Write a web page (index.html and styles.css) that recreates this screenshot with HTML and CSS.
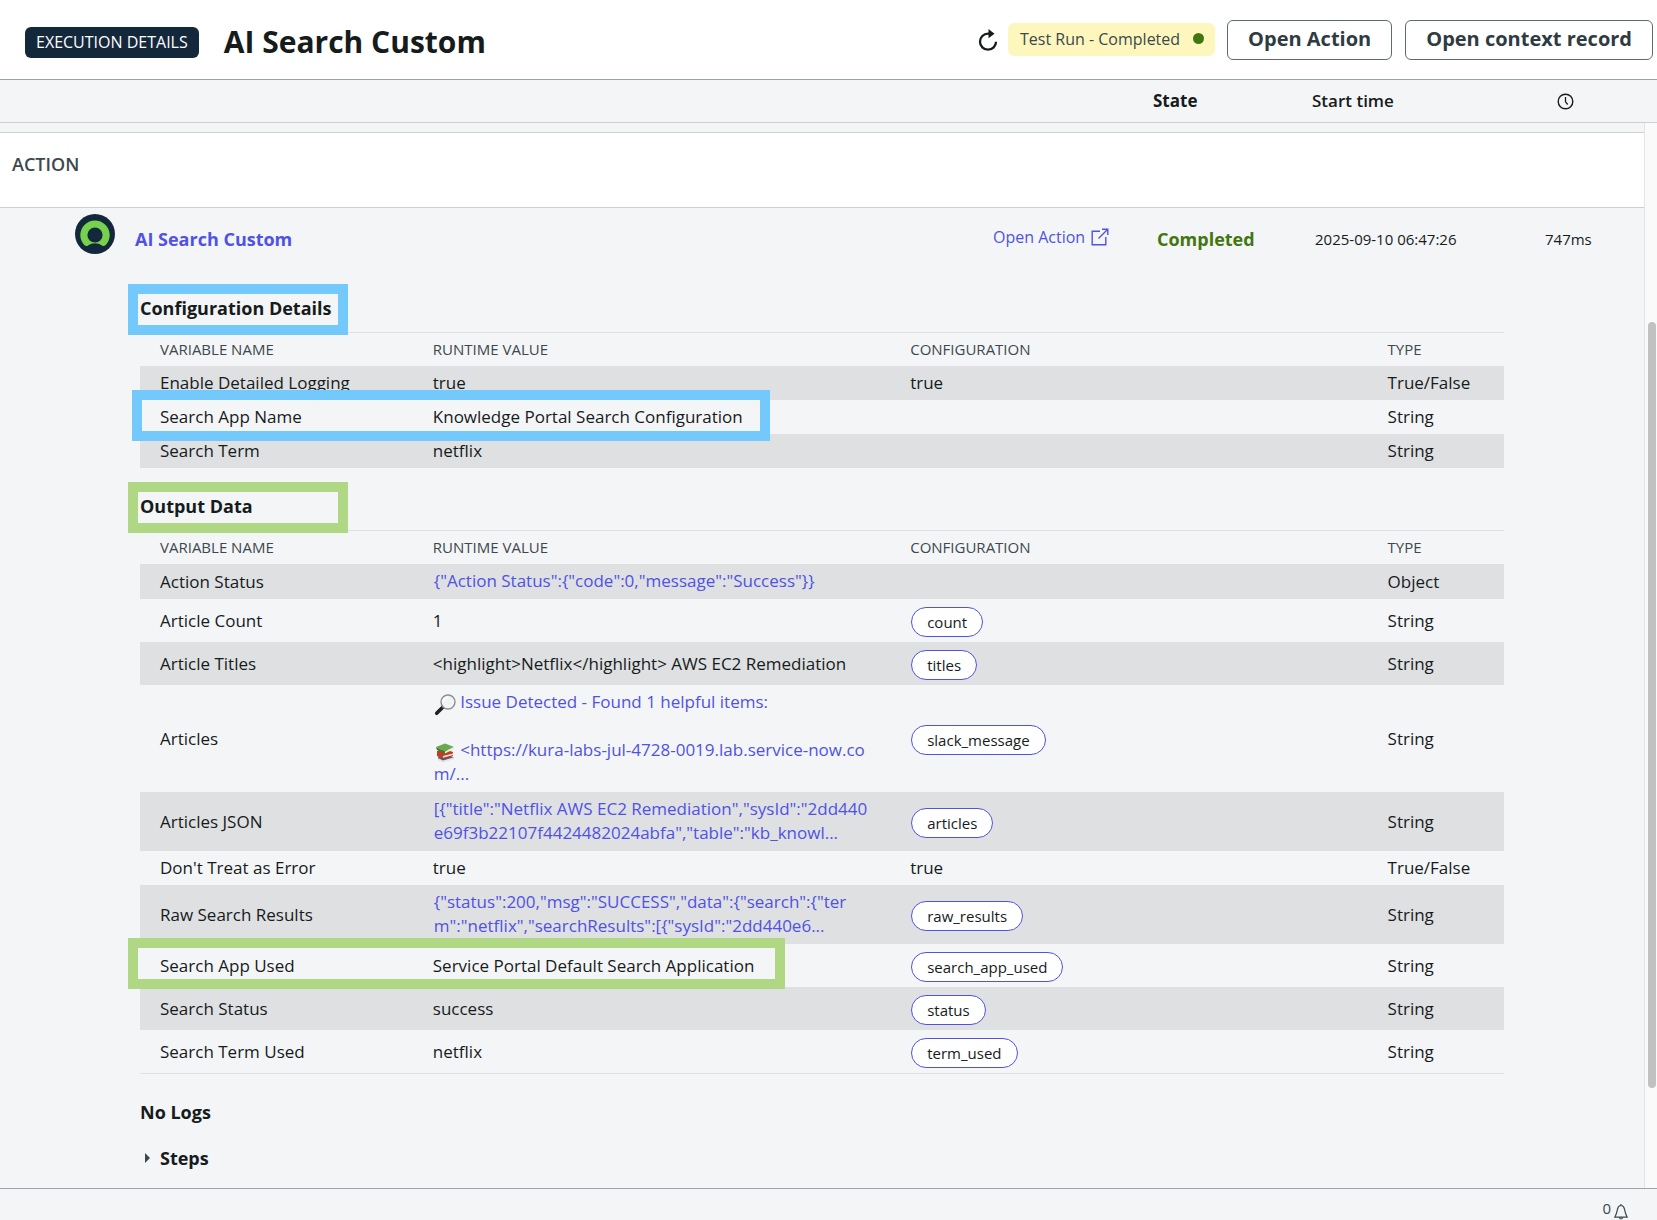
FILE: index.html
```html
<!DOCTYPE html>
<html lang="en">
<head>
<meta charset="utf-8">
<title>Execution Details - AI Search Custom</title>
<link rel="stylesheet" href="styles.css">
</head>
<body>
<header class="topbar">
  <span class="badge">EXECUTION DETAILS</span>
  <h1 class="title">AI Search Custom</h1>
  <button class="refresh" type="button" aria-label="Refresh">
    <svg width="20" height="24" viewBox="0 0 20 24"><path d="M11.500 5.700H10A8 8 0 1 0 18 13.700" fill="none" stroke="#161b1c" stroke-width="2.300"/><path d="M10.500 1 16.500 5.700 10.500 10.200z" fill="#161b1c"/></svg>
  </button>
  <span class="run-state">Test Run - Completed <i class="dot"></i></span>
  <button class="btn" type="button">Open Action</button>
  <button class="btn" type="button">Open context record</button>
</header>

<div class="columns">
  <span></span>
  <span class="col-state">State</span>
  <span class="col-start">Start time</span>
  <svg width="17" height="17" viewBox="0 0 17 17" fill="none" stroke="#161b1c"><circle cx="8.500" cy="8.500" r="7.300" stroke-width="1.400"/><path d="M8.500 4v4.800l2.200 2.700" stroke-width="1.300"/></svg>
</div>

<div class="body">
  <main class="content">
    <h2 class="group">ACTION</h2>

    <div class="run">
      <svg class="run-logo" width="40" height="40" viewBox="0 0 40 40"><circle cx="20" cy="20" r="20" fill="#14283b"/><path d="M20 6.500A14.700 14.700 0 0 0 5.300 21c0 4 1.600 7.600 4.200 10.200 1 1 2.500 1.100 3.600.3 4.100-3 9.700-3 13.800 0 1.100.8 2.600.7 3.600-.3A14.600 14.600 0 0 0 34.700 21 14.700 14.700 0 0 0 20 6.500z" fill="#76d14e"/><circle cx="20" cy="21" r="7.600" fill="#14283b"/></svg>
      <a class="run-name" href="#">AI Search Custom</a>
      <a class="run-open" href="#">Open Action<svg width="18" height="18" viewBox="0 0 18 18" fill="none" stroke="#4f52e5" stroke-width="1.400"><path d="M9 3.200H1.200v13.600h13.600V9M7.500 10.500 16.500 1.500M11 1.200h5.800V7"/></svg></a>
      <span class="run-status">Completed</span>
      <span class="run-time">2025-09-10 06:47:26</span>
      <span class="run-time">747ms</span>
    </div>

    <section class="details">
      <h3 class="heading">Configuration Details<i class="mark mark-heading blue"></i></h3>
      <table class="vars">
        <colgroup><col class="c-name"><col class="c-value"><col class="c-value"><col></colgroup>
        <thead><tr><th>VARIABLE NAME</th><th>RUNTIME VALUE</th><th>CONFIGURATION</th><th>TYPE</th></tr></thead>
        <tbody>
          <tr><td>Enable Detailed Logging</td><td>true</td><td>true</td><td>True/False</td></tr>
          <tr><td class="anchor">Search App Name<i class="mark mark-config blue"></i></td><td>Knowledge Portal Search Configuration</td><td></td><td>String</td></tr>
          <tr><td>Search Term</td><td>netflix</td><td></td><td>String</td></tr>
        </tbody>
      </table>

      <h3 class="heading">Output Data<i class="mark mark-heading green"></i></h3>
      <table class="vars vars-output">
        <colgroup><col class="c-name"><col class="c-value"><col class="c-value"><col></colgroup>
        <thead><tr><th>VARIABLE NAME</th><th>RUNTIME VALUE</th><th>CONFIGURATION</th><th>TYPE</th></tr></thead>
        <tbody>
          <tr><td>Action Status</td><td class="link-cell"><a href="#">{"Action Status":{"code":0,"message":"Success"}}</a></td><td></td><td>Object</td></tr>
          <tr><td>Article Count</td><td>1</td><td class="pill-cell"><span class="pill">count</span></td><td>String</td></tr>
          <tr><td>Article Titles</td><td>&lt;highlight&gt;Netflix&lt;/highlight&gt; AWS EC2 Remediation</td><td class="pill-cell"><span class="pill">titles</span></td><td>String</td></tr>
          <tr><td>Articles</td><td class="link-cell"><a href="#"><svg class="emoji" width="22" height="22" viewBox="0 0 22 22"><path d="M9.500 12.500 2.700 19.300" stroke="#222" stroke-width="3.600" stroke-linecap="round"/><path d="M11.500 10.500 8.500 13.500" stroke="#777" stroke-width="2"/><circle cx="14" cy="8" r="7" fill="#f2f3f5" stroke="#8b8f94" stroke-width="1.400"/><path d="M9.500 7.500a4.500 4.500 0 0 1 4.500-4" fill="none" stroke="#fff" stroke-width="1.500"/></svg> Issue Detected - Found 1 helpful items:<br><br><svg class="emoji" width="22" height="22" viewBox="0 0 22 22"><path d="M4 15l11-2 5 3-11 4-4-2z" fill="#4b5b7d"/><path d="M5 16.500l4 2 10-3v2l-10 3-4-2z" fill="#e9e6df"/><path d="M3 9l10-1 6 2v4l-10 3-6-3z" fill="#c43d22"/><path d="M9 14l10-2.500v1.600l-10 2.600z" fill="#efe7dc"/><path d="M2 5l9-3.500 9 3.500-9 4.500z" fill="#69a84b"/><path d="M2 5l9 4.500V12L3 8z" fill="#3f7a2d"/><path d="M11 9.500 20 5v2l-9 4.500z" fill="#e8efe1"/></svg> &lt;https://kura-labs-jul-4728-0019.lab.service-now.co<br>m/...</a></td><td class="pill-cell"><span class="pill">slack_message</span></td><td>String</td></tr>
          <tr><td>Articles JSON</td><td class="link-cell"><a href="#">[{"title":"Netflix AWS EC2 Remediation","sysId":"2dd440<br>e69f3b22107f4424482024abfa","table":"kb_knowl...</a></td><td class="pill-cell"><span class="pill">articles</span></td><td>String</td></tr>
          <tr><td>Don't Treat as Error</td><td>true</td><td>true</td><td>True/False</td></tr>
          <tr><td>Raw Search Results</td><td class="link-cell"><a href="#">{"status":200,"msg":"SUCCESS","data":{"search":{"ter<br>m":"netflix","searchResults":[{"sysId":"2dd440e6...</a></td><td class="pill-cell"><span class="pill">raw_results</span></td><td>String</td></tr>
          <tr><td class="anchor">Search App Used<i class="mark mark-output green"></i></td><td>Service Portal Default Search Application</td><td class="pill-cell"><span class="pill">search_app_used</span></td><td>String</td></tr>
          <tr><td>Search Status</td><td>success</td><td class="pill-cell"><span class="pill">status</span></td><td>String</td></tr>
          <tr><td>Search Term Used</td><td>netflix</td><td class="pill-cell"><span class="pill">term_used</span></td><td>String</td></tr>
        </tbody>
      </table>

      <h3 class="subheading">No Logs</h3>
      <h3 class="subheading"><button class="steps" type="button"><svg width="6" height="10" viewBox="0 0 6 10"><path d="M0 0l5 5-5 5z" fill="#3c484d"/></svg>Steps</button></h3>
    </section>
  </main>
  <div class="track"><div class="thumb"></div></div>
</div>

<footer class="footer">
  <span>0</span>
  <svg width="14" height="16" viewBox="0 0 14 16" fill="none" stroke="#3c484d" stroke-width="1.200"><path d="M7 1.500C4.800 1.500 4 2.700 3.600 4.800 3 8 2.500 10 .8 13.200h12.400C11.500 10 11 8 10.400 4.800 10 2.700 9.200 1.500 7 1.500zM7 0v1.500M5.500 13.500c.2 2 2.800 2 3 0"/></svg>
</footer>
</body>
</html>
```
FILE: styles.css
```css
* { box-sizing: border-box; }

body {
  margin: 0;
  min-height: 100vh;
  display: flex;
  flex-direction: column;
  background: #f4f5f7;
  color: #161b1c;
  font: 17px/24px "Open Sans", "Noto Sans", sans-serif;
}

h1, h2, h3 { margin: 0; }
a { color: #4f52e5; text-decoration: none; }
button { font-family: inherit; cursor: pointer; }
svg { display: block; flex: none; }

.topbar {
  display: flex;
  align-items: center;
  height: 80px;
  padding: 0 4px 0 25px;
  background: #fff;
  border-bottom: 1px solid #9aa3a9;
}
.badge {
  padding: 3px 11px 4px;
  border-radius: 6px;
  background: #14283b;
  color: #fff;
  font-size: 16px;
  margin-top: 5px;
}
.title {
  flex: 1;
  margin: 5px 0 0 25px;
  font-size: 30px;
  line-height: 40px;
  font-weight: 700;
}
.refresh {
  padding: 0;
  border: 0;
  background: none;
  margin-right: 10px;
}
.run-state {
  display: flex;
  align-items: center;
  gap: 13px;
  height: 33px;
  padding: 0 11px 2px 12px;
  margin-right: 12px;
  border-radius: 6px;
  background: #fef7bd;
  color: #3c484d;
  font-size: 16px;
}
.dot {
  width: 11px;
  height: 11px;
  border-radius: 50%;
  background: #42760f;
}
.btn {
  height: 40px;
  padding: 0 20px 3px;
  border: 1px solid #5e6b73;
  border-radius: 6px;
  background: #fff;
  color: #2e3b42;
  font-size: 20px;
  font-weight: 700;
}
.btn + .btn { margin-left: 13px; }

.columns {
  display: grid;
  grid-template-columns: 1fr 159px 245px 100px;
  align-items: center;
  height: 43px;
  border-bottom: 1px solid #cbd0d3;
}
.col-state { font-weight: 700; }
.col-start { font-weight: 600; }

.body { flex: 1; display: flex; }
.content { flex: 1; min-width: 0; padding-top: 9px; }
.group {
  height: 76px;
  padding: 19px 12px;
  border: solid #cbd0d3;
  border-width: 1px 0;
  background: #fff;
  color: #3c484d;
  font-size: 18px;
  font-weight: 600;
}

.run {
  display: grid;
  grid-template-columns: 60px 1fr 164px 158px 230px 99px;
  align-items: start;
  height: 62px;
  padding: 6px 0 0 75px;
}
.run-name, .run-status, .run-time { padding-top: 13px; }
.run-name { font-size: 18px; font-weight: 700; }
.run-open {
  display: flex;
  align-items: center;
  gap: 6px;
  padding-top: 11px;
  font-size: 16px;
}
.run-status { color: #42760f; font-size: 18px; font-weight: 700; }
.run-time { font-size: 15px; }

.details { padding: 0 140px 18px; }
.heading {
  position: relative;
  padding: 26px 0 12px;
  font-size: 18px;
  font-weight: 700;
}

.vars {
  width: 100%;
  table-layout: fixed;
  border-collapse: separate;
  border-spacing: 0;
  border-top: 1px solid #dfe1e4;
}
.vars-output { border-bottom: 1px solid #dfe1e4; }
.c-name { width: 20%; }
.c-value { width: 35%; }
.vars th {
  padding: 4px 0 5px 20px;
  color: #3c484d;
  font-size: 15px;
  font-weight: 400;
  text-align: left;
}
.vars td { padding: 5px 0 5px 20px; white-space: nowrap; }
.vars tbody tr:nth-child(odd) { background: #dfe0e2; }
.vars .link-cell { padding: 5px 0 6px 21px; }
.vars .pill-cell { padding: 8px 0 5px 21px; }
.pill {
  display: block;
  width: fit-content;
  padding: 2px 15px;
  border: 1px solid #4f52e5;
  border-radius: 15px;
  background: #fff;
  font-size: 15px;
}
.emoji { display: inline-block; vertical-align: -4px; margin: -4px 0; }

/* Call-out frames laid over headings and rows */
.anchor { position: relative; }
.mark {
  position: absolute;
  height: 51px;
  border: 10px solid;
  z-index: 1;
  pointer-events: none;
}
.blue { border-color: #73c9fb; }
.green { border-color: #afd784; }
.mark-heading { left: -12px; top: 14px; width: 220px; }
.mark-config { left: -8px; top: -10px; width: 638px; }
.mark-output { left: -12px; top: -6px; width: 657px; }

.subheading {
  padding-top: 26px;
  font-size: 18px;
  font-weight: 700;
}
.subheading + .subheading { padding-top: 22px; }
.steps {
  display: flex;
  align-items: center;
  gap: 9px;
  padding: 0 0 0 5px;
  border: 0;
  background: none;
  color: inherit;
  font-size: 18px;
  font-weight: 700;
  line-height: 24px;
}

.track {
  display: flex;
  flex-direction: column;
  width: 13px;
  padding: 199px 1px 100px 3px;
  border-left: 1px solid #e4e4e4;
  background: #fafafa;
}
.thumb { flex: 1; border-radius: 4px; background: #c1c1c1; }

.footer {
  display: flex;
  justify-content: flex-end;
  align-items: flex-end;
  gap: 3px;
  height: 32px;
  padding-right: 29px;
  border-top: 1px solid #9aa3a9;
  color: #3c484d;
  font-size: 15px;
}
```
